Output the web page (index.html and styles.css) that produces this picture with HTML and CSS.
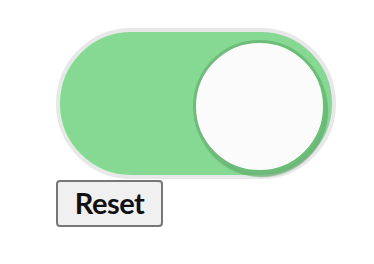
FILE: index.html
```html
<!DOCTYPE html>
<html lang="en">
<head>
	<meta charset="UTF-8">
	<title>Toggle</title>
	<link rel="stylesheet" href="styles.css">
</head>
<body>
	<main class="wrap">
		<label class="toggle">
			<span class="track"></span>
			<span class="knob"></span>
		</label>
		<button class="reset">Reset</button>
	</main>
</body>
</html>
```

FILE: styles.css
```css
body {
	margin: 0;
	background: #fff;
}
main.wrap {
	padding: 28px 0 0 56px;
	display: flex;
	flex-direction: column;
	align-items: flex-start;
}
/* toggle */
label.toggle {
	display: block;
	position: relative;
	width: 280px;
	height: 151px;
	box-sizing: border-box;
	border: 4px solid #e8e8e8;
	border-radius: 76px;
	background: #86d993;
}
label.toggle span.knob {
	position: absolute;
	top: 8px;
	left: 133px;
	width: 127px;
	height: 127px;
	border: 3px solid #6dbd79;
	border-radius: 50%;
	background: #fbfbfb;
	box-shadow: 2px 4px 1px rgba(95, 170, 108, .7);
}
/* reset */
button.reset {
	margin-top: 1px;
	width: 107px;
	height: 47px;
	padding: 0 0 2px;
	border: 2px solid #777;
	border-radius: 4px;
	background: #f0f0f0;
	font: 700 29px "Lato", "Liberation Sans", sans-serif;
	letter-spacing: -0.5px;
	color: #111;
}
```
